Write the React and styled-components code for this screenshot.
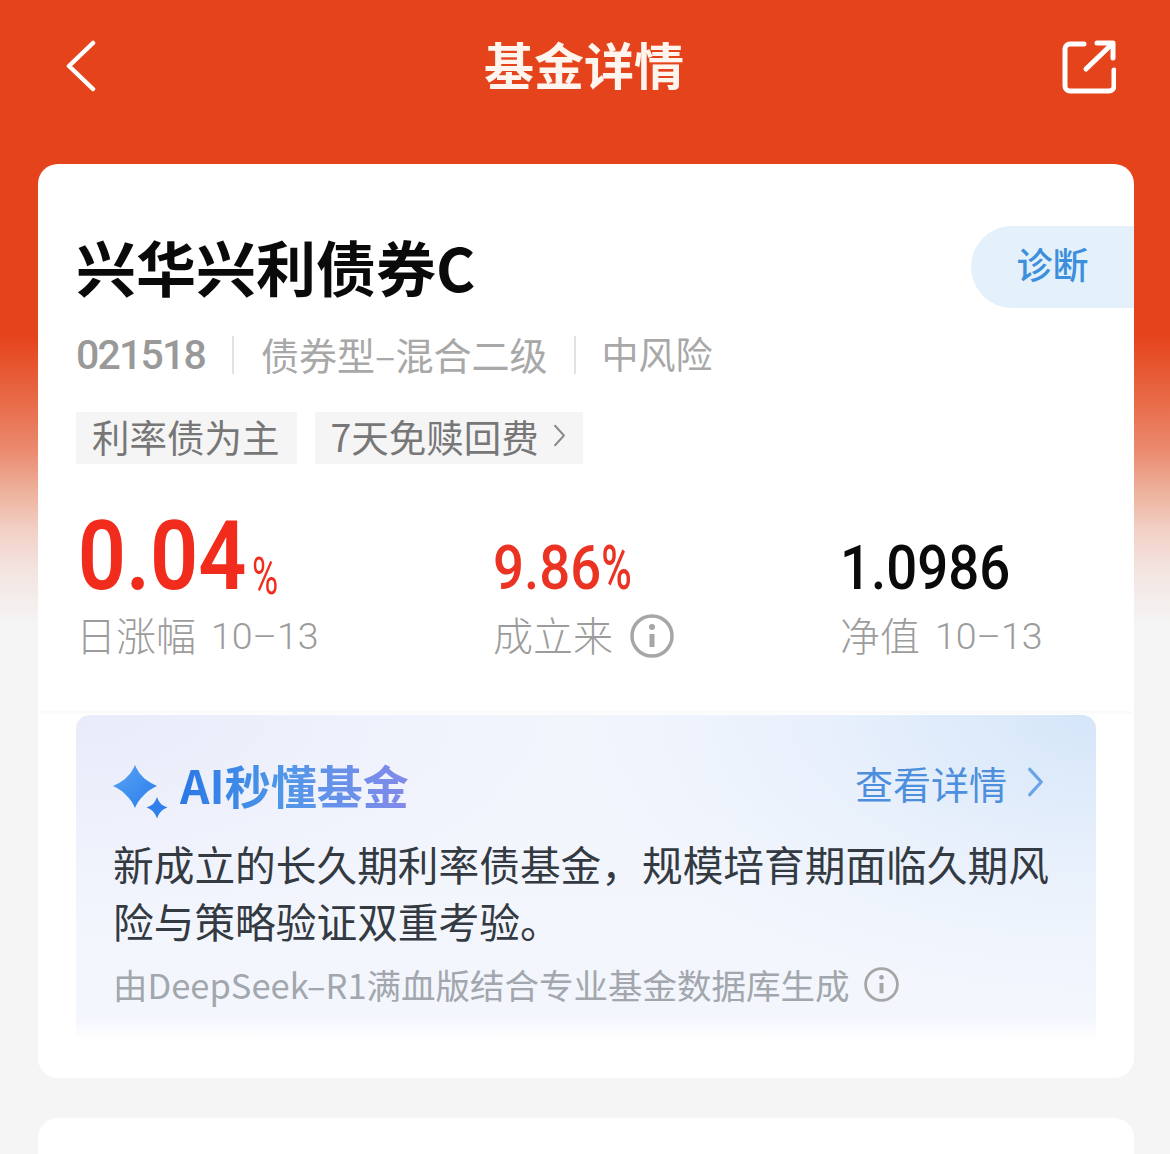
import React from "react";
import styled, { createGlobalStyle } from "styled-components";

const CJK = `"Noto Sans CJK SC", "Noto Sans", sans-serif`;

const GlobalStyle = createGlobalStyle`
  html, body {
    margin: 0;
    padding: 0;
    background: #f5f5f5;
  }
  * {
    box-sizing: border-box;
  }
`;

const Page = styled.div`
  width: 1170px;
  height: 1154px;
  overflow: hidden;
  font-family: ${CJK};
  background: linear-gradient(
    180deg,
    #e5431b 0,
    #e5431b 335px,
    #e86a47 400px,
    #ea8a6e 450px,
    #edb09a 490px,
    #f2d0c6 530px,
    #f3e4e0 570px,
    #f5f5f5 625px
  );
`;

const Header = styled.header`
  height: 164px;
  padding: 40px 54px 0 66px;
  display: flex;
  justify-content: space-between;
  align-items: flex-start;
  color: #fff;
`;

const Title = styled.h1`
  margin: -2px 0 0 10px;
  font-size: 50px;
  line-height: 50px;
  font-weight: 600;
  color: #fff5ef;
`;

const Card = styled.section`
  position: relative;
  margin: 0 36px 0 38px;
  height: 914px;
  padding: 60px 38px 0;
  background: #fff;
  border-radius: 20px;
`;

const FundName = styled.h2`
  margin: 0;
  font-size: 60px;
  line-height: 84px;
  font-weight: 600;
  color: #0a0a0a;
`;

const DiagnoseTab = styled.div`
  position: absolute;
  top: 62px;
  right: 0;
  width: 163px;
  height: 82px;
  padding-bottom: 8px;
  display: flex;
  align-items: center;
  justify-content: center;
  background: #e4f1fb;
  border-radius: 41px 0 0 41px;
  color: #3e8fdb;
  font-size: 36px;
  font-weight: 500;
`;

const MetaRow = styled.div`
  margin-top: 21px;
  display: flex;
  align-items: center;
  height: 52px;
  color: #a8a8a8;
`;

const MetaText = styled.span`
  padding-bottom: 4px;
  font-size: ${({ $size }) => $size}px;
`;

const Code = styled.span`
  font-family: Roboto, sans-serif;
  font-size: 41px;
  font-weight: 500;
  letter-spacing: -1.8px;
  color: #999;
`;

const MetaDivider = styled.i`
  width: 2px;
  height: 38px;
  margin: 0 ${({ $after }) => $after}px 0 27px;
  background: #e2e2e2;
`;

const TagRow = styled.div`
  margin-top: 31px;
  display: flex;
  gap: 18px;
`;

const Tag = styled.div`
  height: 52px;
  padding: 0 17px 6px 16px;
  display: flex;
  align-items: center;
  gap: 14px;
  background: #f5f5f5;
  color: #777;
  font-size: 37.5px;
`;

const Stats = styled.div`
  margin-top: 47px;
  display: grid;
  grid-template-columns: 417px 347px 1fr;
  align-items: end;
`;

const Stat = styled.div`
  display: flex;
  flex-direction: column;
  min-width: 0;
`;

const Value = styled.div`
  height: 90px;
  padding-left: ${({ $inset }) => $inset || 0}px;
  display: flex;
  align-items: baseline;
  white-space: nowrap;
  font-family: Roboto, sans-serif;
  transform: scaleX(0.88);
  transform-origin: left center;
  color: ${({ $color }) => $color};
  font-size: ${({ $size }) => $size}px;
  font-weight: ${({ $weight }) => $weight};
  line-height: ${({ $lead }) => $lead}px;
`;

const Percent = styled.span`
  display: inline-block;
  transform-origin: left bottom;
  font-size: ${({ $size }) => $size}px;
  font-weight: ${({ $weight }) => $weight};
  margin-left: ${({ $gap }) => $gap}px;
  transform: translateY(${({ $drop }) => $drop}px) scaleX(${({ $squeeze }) => $squeeze});
`;

const StatLabel = styled.div`
  height: 48px;
  margin-top: 9px;
  display: flex;
  align-items: center;
  gap: 15px;
  font-size: 40px;
  font-weight: 300;
  color: #9c9c9c;
  white-space: nowrap;
`;

const DateText = styled.span`
  margin-top: 4px;
  font-family: Roboto, sans-serif;
  font-size: 37.5px;
  font-weight: 300;
`;

const LabelIcon = styled.span`
  display: flex;
  margin: 4px 0 0 2px;
`;

const Seam = styled.div`
  position: absolute;
  left: -1px;
  right: -1px;
  top: 547px;
  height: 3px;
  background: #fbfbfb;
`;

const AiBox = styled.div`
  position: relative;
  margin-top: 57px;
  height: 325px;
  padding: 41px 40px 0 37px;
  border-radius: 14px 14px 0 0;
  background:
    linear-gradient(180deg, rgba(255, 255, 255, 0) 93%, #fff 100%),
    radial-gradient(ellipse 520px 280px at 100% 0, #d5e6f9 0, rgba(223, 236, 251, 0.5) 55%, rgba(240, 246, 253, 0) 100%),
    radial-gradient(ellipse 500px 220px at 0 0, #e9ebfa 0, rgba(236, 239, 251, 0.6) 55%, rgba(240, 246, 253, 0) 100%),
    linear-gradient(180deg, #f3f5fd 0, #f3f6fd 100%);
`;

const AiHead = styled.div`
  display: flex;
  justify-content: space-between;
  align-items: center;
  height: 56px;
`;

const AiTitle = styled.div`
  display: flex;
  align-items: center;
  gap: 12px;
`;

const SparkWrap = styled.span`
  display: flex;
  padding-top: 16px;
`;

const AiName = styled.span`
  font-size: 46px;
  line-height: 56px;
  font-weight: 700;
  background: linear-gradient(90deg, #2a78e6 0, #4f97e8 45%, #8489ea 100%);
  -webkit-background-clip: text;
  background-clip: text;
  color: transparent;
`;

const DetailLink = styled.div`
  display: flex;
  align-items: center;
  gap: 20px;
  margin-bottom: 4px;
  color: #4d8fdc;
  font-size: 38px;
  padding-right: 12px;
`;

const AiText = styled.p`
  margin: 23px 0 0;
  font-size: 40.7px;
  line-height: 57px;
  color: #333a42;
  width: 960px;
`;

const AiNote = styled.div`
  margin-top: 13px;
  height: 44px;
  display: flex;
  align-items: center;
  gap: 14px;
  color: #a2a7ad;
  font-size: 34.5px;
  white-space: nowrap;
`;

const NextCard = styled.section`
  margin: 40px 36px 0 38px;
  height: 200px;
  background: #fff;
  border-radius: 20px;
`;

const BackIcon = () => (
  <svg width="30" height="52" viewBox="0 0 30 52" fill="none">
    <path d="M27 3 3 26l24 23" stroke="#fff" strokeWidth="4.5" strokeLinecap="round" strokeLinejoin="round" />
  </svg>
);

const ShareIcon = () => (
  <svg width="54" height="54" viewBox="0 0 54 54" fill="none" stroke="#fff" strokeWidth="5" strokeLinecap="round" strokeLinejoin="round">
    <path d="M22 4H8a5 5 0 0 0-5 5v37a5 5 0 0 0 5 5h39a5 5 0 0 0 5-5V30" />
    <path d="M24 29 50 4" />
    <path d="M35 3h16v15" />
  </svg>
);

const ChevronIcon = ({ color, width, height, stroke }) => (
  <svg width={width} height={height} viewBox="0 0 14 26" fill="none">
    <path d="M2 2l10 11L2 24" stroke={color} strokeWidth={stroke} strokeLinecap="round" strokeLinejoin="round" />
  </svg>
);

const InfoIcon = ({ size }) => (
  <svg width={size} height={size} viewBox="0 0 44 44" fill="none">
    <circle cx="22" cy="22" r="20" stroke="#a6a6a6" strokeWidth="3.5" />
    <circle cx="22" cy="13" r="3" fill="#a6a6a6" />
    <path d="M22 20v13" stroke="#a6a6a6" strokeWidth="5" />
  </svg>
);

const SparkIcon = () => (
  <svg width="55" height="54" viewBox="0 0 55 54" fill="none">
    <defs>
      <linearGradient id="spark" x1="0" y1="0" x2="1" y2="1">
        <stop offset="0" stopColor="#5aa5f5" />
        <stop offset="1" stopColor="#2a7bea" />
      </linearGradient>
    </defs>
    <path d="M22 0c3 7 6 10 10 14 4 3 8 5 12 7-4 2-8 4-12 8-4 4-7 7-10 14-3-7-6-10-10-14-4-4-8-6-12-8 4-2 8-4 12-7 4-4 7-7 10-14z" fill="url(#spark)" />
    <path d="M44 32c1.500 4 3 6 4.500 7.500 1.500 1 3.500 2 6 3-2.500 1-4.500 2-6 3.500-1.500 1.500-3 3.500-4.500 7.500-1.500-4-3-6-4.500-7.500-1.500-1.500-3.500-2.500-6-3.500 2.500-1 4.500-2 6-3 1.500-1.500 3-3.500 4.500-7.500z" fill="#2f80ec" />
  </svg>
);

const App = () => {
  return (
    <Page>
      <GlobalStyle />
      <Header>
        <BackIcon />
        <Title>基金详情</Title>
        <ShareIcon />
      </Header>

      <Card>
        <FundName>兴华兴利债券C</FundName>
        <DiagnoseTab>诊断</DiagnoseTab>

        <MetaRow>
          <Code>021518</Code>
          <MetaDivider $after={27} />
          <MetaText $size={38}>债券型–混合二级</MetaText>
          <MetaDivider $after={25} />
          <MetaText $size={37}>中风险</MetaText>
        </MetaRow>

        <TagRow>
          <Tag>利率债为主</Tag>
          <Tag>
            7天免赎回费
            <ChevronIcon color="#8a8a8a" width={13} height={23} stroke={2.2} />
          </Tag>
        </TagRow>

        <Stats>
          <Stat>
            <Value $color="#f22c1c" $size={96} $weight={600} $lead={90} $inset={2}>
              0.04
              <Percent $size={52} $weight={400} $gap={6} $drop={5} $squeeze={0.78}>%</Percent>
            </Value>
            <StatLabel>
              日涨幅
              <DateText>10–13</DateText>
            </StatLabel>
          </Stat>
          <Stat>
            <Value $color="#ea3323" $size={62} $weight={500} $lead={113}>
              9.86
              <Percent $size={62} $weight={500} $gap={0} $drop={0} $squeeze={0.76}>%</Percent>
            </Value>
            <StatLabel>
              成立来
              <LabelIcon>
                <InfoIcon size={44} />
              </LabelIcon>
            </StatLabel>
          </Stat>
          <Stat>
            <Value $color="#0a0a0a" $size={62} $weight={500} $lead={113}>1.0986</Value>
            <StatLabel>
              净值
              <DateText>10–13</DateText>
            </StatLabel>
          </Stat>
        </Stats>

        <Seam />

        <AiBox>
          <AiHead>
            <AiTitle>
              <SparkWrap>
                <SparkIcon />
              </SparkWrap>
              <AiName>AI秒懂基金</AiName>
            </AiTitle>
            <DetailLink>
              查看详情
              <ChevronIcon color="#6aa3e6" width={17} height={30} stroke={2.8} />
            </DetailLink>
          </AiHead>
          <AiText>新成立的长久期利率债基金，规模培育期面临久期风险与策略验证双重考验。</AiText>
          <AiNote>
            由DeepSeek–R1满血版结合专业基金数据库生成
            <InfoIcon size={35} />
          </AiNote>
        </AiBox>
      </Card>

      <NextCard />
    </Page>
  );
};

export default App;
